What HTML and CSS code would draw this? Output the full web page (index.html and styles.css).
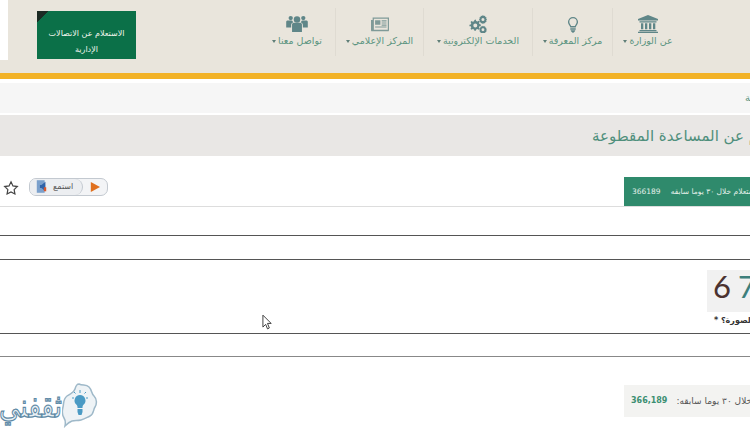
FILE: index.html
```html
<!DOCTYPE html>
<html lang="ar">
<head>
  <meta charset="UTF-8" />
  <title>الاستعلام عن المساعدة المقطوعة</title>
  <link rel="stylesheet" href="styles.css">
</head>
<body>
  <header class="top">
    <div class="top-inner">
      <a class="inquiry" dir="rtl">الاستعلام عن الاتصالات الإدارية</a>
      <nav class="nav">
        <a class="nav-item nav-contact">
          <svg class="nav-icon" viewBox="0 0 24 20"><circle cx="12" cy="5" r="3.6"/><circle cx="5" cy="3.4" r="2.4"/><circle cx="19" cy="3.4" r="2.4"/><path d="M6.5 10.5c0-1 1-1.800 2-1.800h7c1 0 2 .8 2 1.800V19h-11z"/><path d="M0 7.500c0-1 1-1.500 2-1.500h4.500c.5 1 1 1.600 1.500 2-1.500.5-2.500 1.500-2.500 3v3H0z"/><path d="M24 7.500c0-1-1-1.500-2-1.500h-4.500c-.5 1-1 1.600-1.500 2 1.500.5 2.500 1.500 2.500 3v3H24z"/></svg>
          <span class="nav-label" dir="rtl">تواصل معنا<i class="caret"></i></span>
        </a>
        <a class="nav-item nav-media">
          <svg class="nav-icon icon-paper" viewBox="0 0 22 18"><path fill-rule="evenodd" d="M2 1h20v15.500a1.500 1.500 0 0 1-1.500 1.500h-19A1.500 1.500 0 0 1 0 16.500V4h2zm1.500 1.500V16h17V2.500zM5 4.500h6.500V10H5zm8 0h6v1.300h-6zm0 2.600h6v1.300h-6zm0 2.600h6V11h-6zM5 12h14v1.300H5z"/></svg>
          <span class="nav-label" dir="rtl">المركز الإعلامي<i class="caret"></i></span>
        </a>
        <a class="nav-item nav-services">
          <svg class="nav-icon" viewBox="0 0 20 20"><path fill-rule="evenodd" d="M6 5.500l1.500-.4.500 1.500 1.500.5 1.300-.8 1.100 1.100-.8 1.400.5 1.300 1.500.4v1.600l-1.500.4-.5 1.300.8 1.400-1.100 1.100-1.300-.8-1.500.5-.5 1.500H6l-.4-1.500-1.400-.5-1.300.8-1.200-1.100.8-1.400-.5-1.300L.5 12.500v-1.600L2 10.500l.5-1.300-.8-1.400 1.200-1.100 1.300.8 1.400-.5zM7 9.500a2.200 2.200 0 1 0 0 4.400 2.200 2.200 0 0 0 0-4.400z"/><path fill-rule="evenodd" d="M15.500 0l1 1 1.300-.2.400 1.400 1.300.6-.4 1.300.9 1-.9 1 .4 1.300-1.300.6-.4 1.300-1.300-.2-1 1-1-1-1.300.2-.4-1.300-1.200-.6.300-1.300-.8-1 .8-1-.3-1.300 1.200-.6.4-1.400 1.300.2zm0 3.400a1.700 1.700 0 1 0 0 3.400 1.700 1.700 0 0 0 0-3.400z"/><path fill-rule="evenodd" d="M15.500 12l1 .8 1.300-.2.400 1.200 1.200.6-.3 1.200.8 1-.8 1 .3 1.100-1.200.6-.4 1.200-1.300-.2-1 .7-1-.7-1.300.2-.4-1.200-1-.6.300-1.100-.7-1 .7-1-.3-1.200 1-.6.4-1.200 1.300.2zm0 2.800a1.600 1.600 0 1 0 0 3.200 1.600 1.600 0 0 0 0-3.200z"/></svg>
          <span class="nav-label" dir="rtl">الخدمات الإلكترونية<i class="caret"></i></span>
        </a>
        <a class="nav-item nav-knowledge">
          <svg class="nav-icon icon-bulb" viewBox="0 0 14 20"><path fill-rule="evenodd" d="M7 0a6.300 6.300 0 0 1 6.300 6.300c0 2.500-1.800 3.900-2.500 5.500-.2.500-.3 1-.3 1.200h-7c0-.2-.1-.7-.3-1.200C2.500 10.200.7 8.800.7 6.300A6.300 6.300 0 0 1 7 0zm0 1.700a4.600 4.600 0 0 0-4.600 4.600c0 1.900 1.500 2.900 2.300 5h4.600c.8-2.100 2.300-3.100 2.300-5A4.600 4.600 0 0 0 7 1.700z"/><path d="M3.600 14h6.800v1.800H3.600zM4 16.500h6l-1 2L7 20l-2-1.500z"/></svg>
          <span class="nav-label" dir="rtl">مركز المعرفة<i class="caret"></i></span>
        </a>
        <a class="nav-item nav-ministry">
          <svg class="nav-icon" viewBox="0 0 20 18"><path d="M10 0l10 4v1.500H0V4z"/><path d="M1.500 6.200h17v1.300h-17zM3 8.300h2.300v6H3zm4 0h2.300v6H7zm4 0h2.300v6H11zm4 0h2.300v6H15zM1.500 15h17v1.300h-17zM0 16.700h20V18H0z"/></svg>
          <span class="nav-label" dir="rtl">عن الوزارة<i class="caret"></i></span>
        </a>
      </nav>
    </div>
  </header>
  <div class="gold-bar"></div>

  <div class="crumbs"><span dir="rtl">الرئيسية</span></div>
  <h1 class="page-title"><span dir="rtl">الاستعلام عن المساعدة المقطوعة</span></h1>

  <div class="tool-row">
    <div class="tools">
      <svg class="star" viewBox="0 0 24 24"><path d="M12 2.800l2.900 6.100 6.600.9-4.800 4.600 1.200 6.600-5.900-3.200-5.900 3.200 1.200-6.600-4.800-4.600 6.600-.9z"/></svg>
      <div class="listen">
        <span class="listen-text">
          <svg class="speaker" viewBox="0 0 14 16"><rect x="1" y="0" width="10" height="16" fill="#7ba0cc"/><path d="M7 6l5-4v12l-5-4H5V6z" fill="#2f62a8"/><path d="M10 9h3v5h-3z" fill="#d9572b"/></svg>
          <span dir="rtl">استمع</span>
        </span>
        <span class="listen-play"><svg viewBox="0 0 12 12"><path d="M1 0l11 6-11 6z"/></svg></span>
      </div>
    </div>
    <div class="counter-band">
      <span class="band-num">366189</span>
      <span class="band-text" dir="rtl">الاستعلام خلال ٣٠ يوما سابقه</span>
    </div>
  </div>

  <div class="field field-a"></div>
  <div class="captcha-row">
    <div class="captcha"><span class="d1">6</span><span class="d2">7</span></div>
    <div class="captcha-label"><span dir="rtl">ما هو الرقم في الصورة؟ *</span></div>
  </div>
  <div class="field field-b"></div>

  <div class="footer-row">
    <div class="logo">
      <span class="logo-text" dir="rtl">ثقفني</span>
      <svg class="logo-bubble" viewBox="0 0 36 46">
        <path d="M17 1c4 2 7 0 10 3s2 6 5 9 3 8 1 11-1 7-5 9-5 3-9 4-6 0-9 1-7 5-7 5 1-5-1-8-2-7-1-11 0-8 4-11 7-3 8-7 3-5 4-5z" fill="#eef3f6" stroke="#9fb9c9" stroke-width="1.500"/>
        <path d="M18 12a5.500 5.500 0 0 1 3.500 9.700c-1 1-1 2-1 3.300h-5c0-1.300 0-2.300-1-3.300A5.500 5.500 0 0 1 18 12zM15.500 26h5v3l-1 3h-3l-1-3z" fill="#4a9ac4"/>
        <path d="M18 7v3M10 15h2M24 15h2M12 9l1.500 1.500M24 9l-1.500 1.500" stroke="#4a9ac4" stroke-width="1"/>
      </svg>
    </div>
    <div class="counter-box">
      <span class="box-num">366,189</span>
      <span class="box-text" dir="rtl">خلال ٣٠ يوما سابقه:</span>
    </div>
  </div>

  <svg class="cursor" viewBox="0 0 12 18"><path d="M1 1v13l3-3 2 5 2-1-2-5h4z" fill="#fff" stroke="#333" stroke-width="1"/></svg>
</body>
</html>
```

FILE: styles.css
```css
* { box-sizing: border-box; }

html, body {
  height: 100%;
}

body {
  margin: 0;
  width: 750px;
  height: 430px;
  overflow: hidden;
  position: relative;
  background: #ffffff;
  font-family: "DejaVu Sans", sans-serif;
  color: #333;
}

.top {
  height: 73px;
  background: #e9e5dc;
}

.top-inner {
  display: flex;
  align-items: flex-start;
  height: 73px;
  padding: 8px 0 0 37px;
  background: linear-gradient(#fff, #fff) no-repeat 0 0 / 8px 60px;
}

.inquiry {
  width: 99px;
  height: 48px;
  margin-top: 3px;
  background: linear-gradient(135deg, #1c2b24 0 8px, #0b7048 8px);
  color: #f2f6ee;
  font-size: 8px;
  line-height: 16px;
  text-align: center;
  padding: 15px 8px 0;
}

.nav {
  display: flex;
  margin-left: 123px;
  height: 48px;
}

.nav-item {
  display: flex;
  flex-direction: column;
  align-items: center;
  border-right: 1px solid #dfdbd2;
  padding-top: 7px;
  color: #5b9480;
}

.nav-contact { width: 77px; }
.nav-media { width: 88px; }
.nav-services { width: 109px; }
.nav-knowledge { width: 80px; }
.nav-ministry { width: 78px; border-right: 0; padding-right: 8px; }

.nav-icon {
  height: 18px;
  width: 22px;
  fill: #5f8688;
}

.icon-paper {
  width: 18px;
  fill: #7f9a98;
}

.icon-bulb {
  height: 16px;
  margin: 2px 0 0;
}

.nav-label {
  font-size: 9.5px;
  line-height: 12px;
  margin-top: 2px;
  white-space: nowrap;
}

.caret {
  display: inline-block;
  margin-right: 2px;
  vertical-align: middle;
  border-top: 3px solid #5f7f78;
  border-left: 2px solid transparent;
  border-right: 2px solid transparent;
}

.gold-bar {
  height: 6px;
  background: #f2b226;
}

.crumbs {
  height: 30px;
  margin-top: 4px;
  padding-left: 745px;
  background: #f6f6f6;
  color: #5b9480;
  font-size: 10px;
  line-height: 30px;
  white-space: nowrap;
  display: flex;
}

.page-title {
  height: 41px;
  margin: 2px 0 0;
  padding-left: 592px;
  background: #e9e7e5;
  color: #4f8f7c;
  font-size: 15px;
  font-weight: normal;
  line-height: 42px;
  white-space: nowrap;
  display: flex;
}

.tool-row {
  display: flex;
  justify-content: space-between;
  align-items: flex-start;
  height: 51px;
  padding-top: 21px;
  border-bottom: 1px solid #ddd;
}

.tools {
  display: flex;
  align-items: center;
  padding-left: 3px;
  gap: 10px;
}

.star {
  width: 16px;
  height: 16px;
  margin-top: 3px;
  fill: none;
  stroke: #444;
  stroke-width: 1.800;
}

.listen {
  display: flex;
  width: 79px;
  height: 18px;
  border: 1px solid #c3c9d0;
  border-radius: 7px;
  background: #f3f4f6;
  overflow: hidden;
}

.listen-text {
  display: flex;
  align-items: center;
  gap: 6px;
  width: 53px;
  padding-left: 6px;
  border-right: 1px solid #c3c9d0;
  border-radius: 0 8px 8px 0;
  background: #eceef1;
  font-size: 8px;
  color: #555;
}

.speaker {
  width: 11px;
  height: 13px;
}

.listen-play {
  display: flex;
  align-items: center;
  padding-left: 7px;
}

.listen-play svg {
  width: 10px;
  height: 10px;
  fill: #e0701f;
}

.counter-band {
  display: flex;
  gap: 10px;
  width: 126px;
  height: 29px;
  padding-left: 8px;
  background: #2f8a6c;
  color: #e4f0ea;
  font-size: 7.5px;
  line-height: 29px;
  white-space: nowrap;
}

.field {
  height: 29px;
  border-bottom: 1px solid #555;
}

.field-a {
  height: 53px;
  background: linear-gradient(#555, #555) no-repeat 0 28px / 100% 1px;
}

.captcha-row {
  height: 74px;
  padding-top: 10px;
  border-bottom: 1px solid #555;
}

.captcha {
  width: 60px;
  height: 42px;
  margin-left: 707px;
  background: #f1f1f1;
  font-family: "Lato", sans-serif;
  font-size: 31px;
  line-height: 32px;
  padding-left: 6px;
  display: flex;
  gap: 7px;
}

.d1 { color: #4b3230; }
.d2 { color: #3d7f7c; }

.captcha-label {
  display: flex;
  margin-top: 3px;
  padding-left: 714px;
  font-size: 8px;
  font-weight: bold;
  line-height: 12px;
  white-space: nowrap;
  color: #333;
}

.field-b {
  height: 23px;
  border-bottom-color: #888;
}

.footer-row {
  position: relative;
  display: flex;
  justify-content: space-between;
  align-items: flex-start;
}

.logo {
  display: flex;
  align-items: center;
  height: 48px;
  margin-top: 25px;
}

.logo-text {
  width: 62px;
  padding-left: 4px;
  font-size: 26px;
  line-height: 40px;
  color: #e8f0f5;
  -webkit-text-stroke: 1px #5f8aa6;
  transform: scaleY(1.25);
}

.logo-bubble {
  width: 36px;
  height: 46px;
}

.counter-box {
  display: flex;
  gap: 9px;
  width: 126px;
  height: 32px;
  margin-top: 28px;
  padding-left: 7px;
  background: #f3f3f1;
  font-size: 9px;
  line-height: 32px;
  white-space: nowrap;
  color: #555;
}

.box-num {
  color: #3c8f72;
  font-weight: bold;
  font-size: 8px;
}

/* mouse pointer caught in the screenshot */
.cursor {
  position: absolute;
  left: 262px;
  top: 314px;
  width: 11px;
  height: 17px;
}
```
